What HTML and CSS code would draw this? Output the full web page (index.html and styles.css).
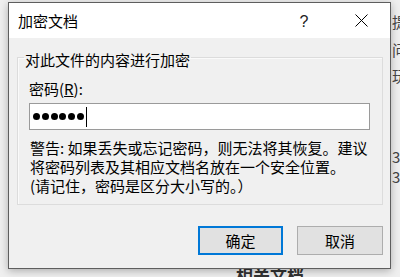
FILE: index.html
```html
<!DOCTYPE html>
<html lang="zh-CN">
<head>
<meta charset="utf-8">
<title>加密文档</title>
<link rel="stylesheet" href="styles.css">
</head>
<body>
<div class="desktop">
  <div class="behind behind-right">
    <span class="bg-char c1">提</span>
    <span class="bg-char c2">问</span>
    <span class="bg-char c3">玩</span>
    <span class="bg-char c4">3</span>
    <span class="bg-char c5">3</span>
  </div>
  <div class="behind behind-bottom">相关文档</div>

  <div class="dialog">
    <div class="titlebar">
      <span class="title">加密文档</span>
      <span class="tb-btn help">?</span>
      <span class="tb-btn close">
        <svg width="13" height="13" viewBox="0 0 13 13"><path d="M0.5 0.5L12.5 12.5M12.5 0.5L0.5 12.5" stroke="#000" stroke-width="1" fill="none"/></svg>
      </span>
    </div>
    <div class="content">
      <fieldset class="group">
        <legend class="group-title">对此文件的内容进行加密</legend>
        <div class="label">密码(<u>R</u>):</div>
        <div class="textbox">
          <span class="dot"></span><span class="dot"></span><span class="dot"></span><span class="dot"></span><span class="dot"></span><span class="dot"></span><span class="caret"></span>
        </div>
        <div class="warning">
          <div class="line">警告: 如果丢失或忘记密码，则无法将其恢复。建议</div>
          <div class="line">将密码列表及其相应文档名放在一个安全位置。</div>
          <div class="line">(请记住，密码是区分大小写的。）</div>
        </div>
      </fieldset>
      <div class="buttons">
        <button class="btn default">确定</button>
        <button class="btn">取消</button>
      </div>
    </div>
  </div>
</div>
</body>
</html>
```

FILE: styles.css
```css
html, body {
  margin: 0;
  padding: 0;
}
body {
  background: #eeeeee;
  font-family: "Noto Sans CJK SC", "Noto Sans", sans-serif;
  color: #000;
}
.desktop {
  position: relative;
  width: 400px;
  height: 277px;
  overflow: hidden;
  background: #efefef;
}
.behind {
  position: absolute;
  color: #444;
}
.behind-right {
  left: 391px;
  top: 0;
  width: 20px;
  height: 277px;
}
.bg-char {
  position: absolute;
  left: 1px;
  font-size: 15px;
  line-height: 20px;
}
.c1 { top: 12px; }
.c2 { top: 40px; }
.c3 { top: 66px; }
.c4 { top: 147px; }
.c5 { top: 167px; }
.behind-bottom {
  left: 236px;
  top: 263px;
  font-size: 17px;
  line-height: 24px;
  font-weight: 700;
  color: #333;
}

.dialog {
  position: absolute;
  left: 8px;
  top: 2px;
  width: 381px;
  height: 265px;
  border: 1px solid #5e5e5e;
  background: #f0f0f0;
  box-shadow: 0 2px 8px rgba(0, 0, 0, 0.28);
  display: flex;
  flex-direction: column;
}
.titlebar {
  height: 35px;
  background: #ffffff;
  display: flex;
  align-items: center;
  padding-left: 9px;
  flex-shrink: 0;
}
.title {
  font-size: 15px;
  line-height: 35px;
  flex: 1;
}
.tb-btn {
  width: 30px;
  height: 35px;
  display: flex;
  align-items: center;
  justify-content: center;
}
.help {
  font-family: "Liberation Sans", "DejaVu Sans", sans-serif;
  font-size: 16px;
  color: #222;
  margin-right: 27px;
  padding-top: 2px;
  box-sizing: border-box;
}
.close {
  margin-right: 14px;
}
.content {
  flex: 1;
  padding: 7px 7px 12px 8px;
  display: flex;
  flex-direction: column;
}
.group {
  margin: 0;
  padding: 0 12px 9px 11px;
  border: 1px solid #dcdcdc;
  box-shadow: inset 1px 1px 0 #fafafa;
  min-width: 0;
}
.group-title {
  font-size: 15px;
  line-height: 20px;
  padding: 5px 1px 0 1px;
  margin-left: -5px;
}
.label {
  font-size: 15px;
  line-height: 20px;
  margin-top: 9px;
}
.textbox {
  margin-top: 4px;
  height: 25px;
  border: 1px solid #9a9a9a;
  background: #fff;
  display: flex;
  align-items: center;
  padding-left: 3px;
  gap: 1.8px;
}
.dot {
  width: 7px;
  height: 7px;
  border-radius: 50%;
  background: #000;
}
.caret {
  width: 1px;
  height: 20px;
  background: #000;
  margin-left: 0.5px;
}
.warning {
  margin-top: 8px;
  font-size: 15px;
  line-height: 19px;
  padding-left: 1px;
}
.line {
  white-space: nowrap;
}
.buttons {
  margin-top: 21px;
  display: flex;
  justify-content: flex-end;
  gap: 14px;
}
.btn {
  width: 86px;
  height: 29px;
  margin: 0;
  padding: 0;
  font-family: "Noto Sans CJK SC", "Noto Sans", sans-serif;
  font-size: 15px;
  line-height: 20px;
  color: #000;
  background: #e1e1e1;
  border: 1px solid #adadad;
  box-sizing: border-box;
}
.btn.default {
  width: 85px;
  border: 2px solid #0078d7;
}
```
